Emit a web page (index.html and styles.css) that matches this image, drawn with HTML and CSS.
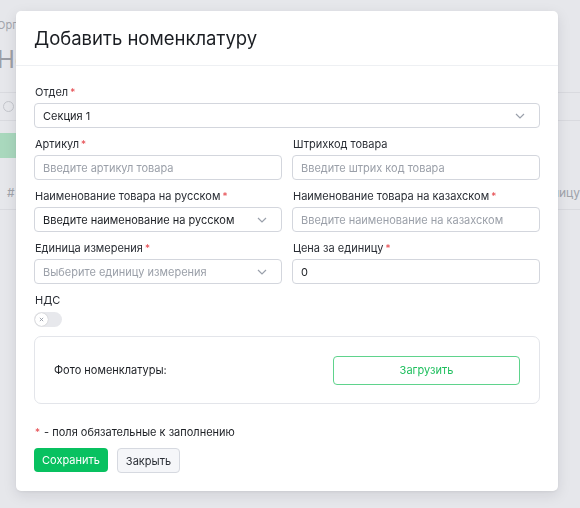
FILE: index.html
```html
<!DOCTYPE html>
<html lang="ru">
<head>
<meta charset="utf-8">
<title>Добавить номенклатуру</title>
<link rel="stylesheet" href="styles.css">
</head>
<body>
<div class="page">
  <div class="crumbs">Организ</div>
  <div class="page-title">Но</div>
  <div class="toolbar">
    <span class="search-icon"></span>
  </div>
  <div class="green-row"><span class="green-btn"></span></div>
  <div class="thead"><span class="th-hash">#</span><span class="th-right">единицу</span></div>
</div>

<div class="modal">
  <div class="modal-header">Добавить номенклатуру</div>
  <div class="modal-body">
    <div class="field">
      <label class="label">Отдел<span class="req">*</span></label>
      <div class="control select"><span class="value">Секция 1</span><svg class="chev" viewBox="0 0 10 6" width="10" height="6"><path d="M1 1l4 4 4-4" fill="none" stroke="#9aa0ab" stroke-width="1.2"/></svg></div>
    </div>

    <div class="grid">
      <div class="field">
        <label class="label">Артикул<span class="req">*</span></label>
        <div class="control"><span class="ph">Введите артикул товара</span></div>
      </div>
      <div class="field">
        <label class="label">Штрихкод товара</label>
        <div class="control"><span class="ph">Введите штрих код товара</span></div>
      </div>
      <div class="field">
        <label class="label">Наименование товара на русском<span class="req">*</span></label>
        <div class="control select"><span class="value">Введите наименование на русском</span><svg class="chev" viewBox="0 0 10 6" width="10" height="6"><path d="M1 1l4 4 4-4" fill="none" stroke="#9aa0ab" stroke-width="1.2"/></svg></div>
      </div>
      <div class="field">
        <label class="label">Наименование товара на казахском<span class="req">*</span></label>
        <div class="control"><span class="ph">Введите наименование на казахском</span></div>
      </div>
      <div class="field">
        <label class="label">Единица измерения<span class="req">*</span></label>
        <div class="control select"><span class="ph">Выберите единицу измерения</span><svg class="chev" viewBox="0 0 10 6" width="10" height="6"><path d="M1 1l4 4 4-4" fill="none" stroke="#9aa0ab" stroke-width="1.2"/></svg></div>
      </div>
      <div class="field">
        <label class="label">Цена за единицу<span class="req">*</span></label>
        <div class="control"><span class="value">0</span></div>
      </div>
    </div>

    <div class="field">
      <label class="label">НДС</label>
      <div class="toggle"><span class="knob"><svg viewBox="0 0 6 6" width="5" height="5"><path d="M1 1l4 4M5 1l-4 4" stroke="#8d939e" stroke-width="1"/></svg></span></div>
    </div>

    <div class="photo-card">
      <span class="photo-label">Фото номенклатуры:</span>
      <button class="upload">Загрузить</button>
    </div>

    <div class="note"><span class="req">*</span> - поля обязательные к заполнению</div>

    <div class="actions">
      <button class="btn-save">Сохранить</button>
      <button class="btn-close">Закрыть</button>
    </div>
  </div>
</div>
</body>
</html>
```

FILE: styles.css
```css
* { box-sizing: border-box; }
html, body { margin: 0; padding: 0; }
body {
  width: 580px;
  height: 508px;
  overflow: hidden;
  background: #e6e7eb;
  font-family: Inter, "Noto Sans", "Liberation Sans", sans-serif;
  color: #1f2329;
}

/* dimmed page behind the modal */
.page {
  display: flex;
  flex-direction: column;
  padding-top: 18px;
  margin-left: -3px;
  color: #a3a6ad;
}
.crumbs { font-size: 11px; line-height: 14px; }
.page-title {
  margin-top: 13px;
  font-size: 24px;
  line-height: 30px;
  color: #9c9fa6;
}
.toolbar {
  margin-top: 17px;
  height: 29px;
  border-top: 1px solid #d9dadf;
  border-bottom: 1px solid #d9dadf;
  display: flex;
  align-items: center;
  padding-left: 6px;
}
.search-icon {
  width: 11px;
  height: 11px;
  border: 1.5px solid #c4c6cc;
  border-radius: 50%;
}
.green-row { margin-top: 12px; height: 25px; display: flex; }
.green-btn { width: 120px; height: 25px; background: #a9d8bd; }
.thead {
  margin-top: 17px;
  height: 35px;
  border-bottom: 1px solid #d9dadf;
  display: flex;
  align-items: center;
  justify-content: space-between;
  font-size: 12px;
  color: #a0a3aa;
  padding-left: 10px;
}
.th-right { margin-right: 0; }

/* modal */
.modal {
  position: fixed;
  left: 16px;
  top: 11px;
  width: 542px;
  height: 480px;
  background: #fff;
  border-radius: 5px;
  box-shadow: 0 4px 14px rgba(20, 24, 40, 0.10), 0 1px 3px rgba(20, 24, 40, 0.06);
}
.modal-header {
  height: 55px;
  border-bottom: 1px solid #eef0f3;
  padding: 0 18px;
  display: flex;
  align-items: center;
  font-size: 18.5px;
  font-weight: 400;
  color: #1b1e23;
}
.modal-body {
  padding: 18px 18px 0 18px;
  display: flex;
  flex-direction: column;
}
.field { display: flex; flex-direction: column; margin-bottom: 8px; }
.grid {
  display: grid;
  grid-template-columns: 1fr 1fr;
  column-gap: 10px;
}
.label {
  font-size: 11px;
  line-height: 16px;
  color: #2a2e35;
  margin-bottom: 3px;
  padding-left: 1px;
}
.req { color: #e5484d; margin-left: 2px; font-size: 10px; }
.control {
  height: 25px;
  border: 1px solid #d3d6dd;
  border-radius: 4px;
  display: flex;
  align-items: center;
  justify-content: space-between;
  padding: 0 14px 0 8px;
  font-size: 11px;
}
.ph { color: #9ba0a9; }
.value { color: #1c1f24; }
.chev { flex: none; }

.toggle {
  margin-top: 1px;
  width: 28px;
  height: 15px;
  border-radius: 8px;
  background: #e7e8ec;
  display: flex;
  align-items: center;
  padding-left: 1px;
}
.knob {
  width: 13px;
  height: 13px;
  border-radius: 50%;
  background: #fff;
  box-shadow: 0 0 1px rgba(0,0,0,0.3);
  display: flex;
  align-items: center;
  justify-content: center;
}

.photo-card {
  margin-top: 1px;
  height: 68px;
  border: 1px solid #e3e5ea;
  border-radius: 7px;
  display: flex;
  align-items: center;
  justify-content: space-between;
  padding: 0 19px 0 19px;
}
.photo-label { font-size: 11px; color: #1c1f24; }
.upload {
  width: 187px;
  height: 29px;
  border: 1px solid #5fd38c;
  border-radius: 4px;
  background: #fff;
  color: #1fbf5e;
  font-family: inherit;
  font-size: 11px;
}

.note {
  margin-top: 20px;
  font-size: 11px;
  line-height: 16px;
  color: #1c1f24;
  padding-left: 1px;
}
.note .req { margin-left: 0; margin-right: 1px; }

.actions {
  margin-top: 8px;
  display: flex;
  gap: 9px;
}
.btn-save {
  height: 24px;
  padding: 0 8px;
  border: none;
  border-radius: 4px;
  background: #08c160;
  color: #fff;
  font-family: inherit;
  font-size: 11px;
}
.btn-close {
  height: 25px;
  padding: 0 8px;
  border: 1px solid #d6d9e0;
  border-radius: 4px;
  background: #f5f6f9;
  color: #2c3037;
  font-family: inherit;
  font-size: 11px;
}
```
